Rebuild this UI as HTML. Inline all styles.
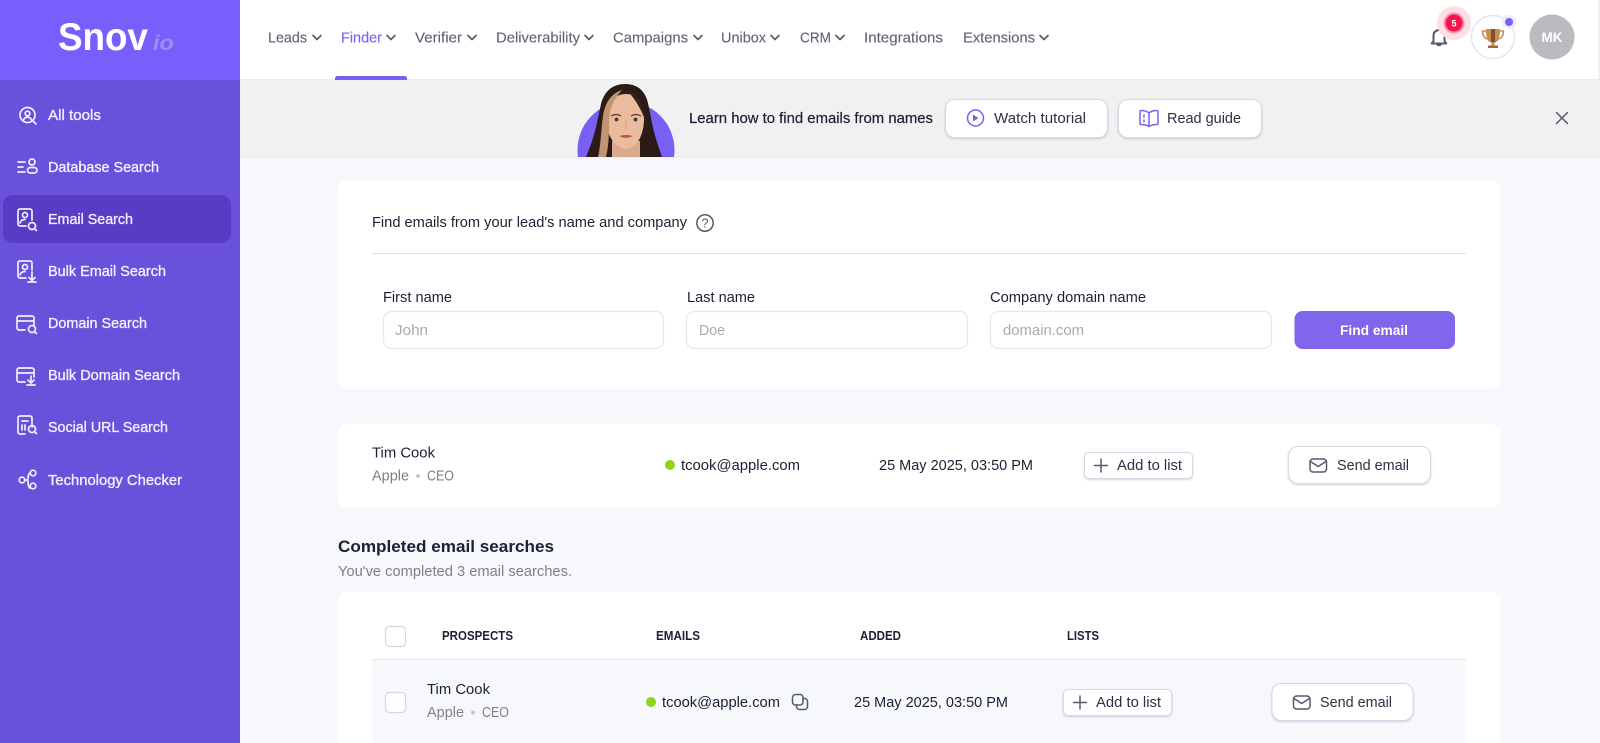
<!DOCTYPE html>
<html lang="en"><head><meta charset="utf-8"><title>Snov.io Email Search</title>
<style>
html,body{margin:0;padding:0;width:1600px;height:743px;overflow:hidden;background:#f7f8fc}
svg{display:block}
text{font-family:"Liberation Sans",sans-serif;font-size:14.5px;fill:#1c2033}
.nav{fill:#5f6374;stroke:#5f6374;stroke-width:.12}
.side{fill:#f1eeff;stroke:#f1eeff;stroke-width:.35;font-size:14.5px}
.ph{fill:#a9aab4}
.gr{fill:#7d7f8b}
.th{font-size:12.5px;font-weight:bold;fill:#1c2033}
.i{fill:none;stroke:#f1eeff;stroke-width:1.7;stroke-linecap:round;stroke-linejoin:round}
.d{fill:none;stroke:#555a6b;stroke-width:1.5;stroke-linecap:round;stroke-linejoin:round}
.p{fill:none;stroke:#7a5ff5;stroke-width:1.5;stroke-linecap:round;stroke-linejoin:round}
.btn{fill:#fff;stroke:#d8d7e6;stroke-width:1;filter:drop-shadow(0 1px 1px rgba(80,70,130,.25))}
.inp{fill:#fff;stroke:#e7e7ed;stroke-width:1.3}
</style></head><body>
<svg width="1600" height="743" viewBox="0 0 1600 743" xmlns="http://www.w3.org/2000/svg">
<rect width="1600" height="743" fill="#f7f8fc"/>
<!-- header -->
<rect x="240" width="1360" height="80" fill="#fff"/>
<rect x="1598" width="2" height="80" fill="#f2f2f4"/>
<rect x="240" y="79" width="1360" height="1" fill="#ececee"/>
<!-- banner -->
<rect x="240" y="80" width="1360" height="77" fill="#f1f1f2"/>
<rect x="240" y="156.500" width="1360" height="1" fill="#e4e4e8"/>
<!-- sidebar -->
<rect width="240" height="743" fill="#6a51dc"/>
<rect width="240" height="80" fill="#7a5efc"/>
<rect x="3" y="195" width="228" height="48" rx="10" fill="#563dc4"/>
<text x="58" y="50" textLength="90" lengthAdjust="spacingAndGlyphs" style="font-size:39px;font-weight:bold;fill:#fff">Snov</text>
<text x="153" y="50" textLength="21" lengthAdjust="spacingAndGlyphs" style="font-size:21px;font-style:italic;font-weight:bold;fill:#9d8ef3">io</text>
<text class="side" x="48" y="120" textLength="53" lengthAdjust="spacingAndGlyphs">All tools</text>
<text class="side" x="48" y="172" textLength="111" lengthAdjust="spacingAndGlyphs">Database Search</text>
<text class="side" x="48" y="224" textLength="85" lengthAdjust="spacingAndGlyphs">Email Search</text>
<text class="side" x="48" y="276" textLength="118" lengthAdjust="spacingAndGlyphs">Bulk Email Search</text>
<text class="side" x="48" y="328" textLength="99" lengthAdjust="spacingAndGlyphs">Domain Search</text>
<text class="side" x="48" y="380" textLength="132" lengthAdjust="spacingAndGlyphs">Bulk Domain Search</text>
<text class="side" x="48" y="432" textLength="120" lengthAdjust="spacingAndGlyphs">Social URL Search</text>
<text class="side" x="48" y="485" textLength="134" lengthAdjust="spacingAndGlyphs">Technology Checker</text>
<!-- sidebar icons -->
<g class="i">
<circle cx="27.500" cy="115" r="7.500"/><circle cx="27.500" cy="113.500" r="2.300"/><path d="M23.500 120c.8-2 2.200-2.800 4-2.800s3.200.8 4 2.800M33 121l3 3"/>
<path d="M18 162h7M18 167h5M18 172h7"/><circle cx="32" cy="162" r="3"/><rect x="27.500" y="167.500" width="9.500" height="5.500" rx="2.700"/>
<path d="M26 226h-6a2 2 0 0 1-2-2v-13a2 2 0 0 1 2-2h10a2 2 0 0 1 2 2v9"/><circle cx="25" cy="215" r="2.500"/><path d="M20 223c.8-2.500 2.500-3.500 5-3.500"/><circle cx="32" cy="226" r="3.500"/><path d="M34.500 228.500l2 2"/>
<path d="M26 278h-6a2 2 0 0 1-2-2v-13a2 2 0 0 1 2-2h10a2 2 0 0 1 2 2v7"/><circle cx="25" cy="267" r="2.500"/><path d="M20 275c.8-2.500 2.500-3.500 5-3.500M32 272v8M29 277.500l3 3 3-3M28 282h8"/>
<path d="M25 330h-6a2 2 0 0 1-2-2v-10a2 2 0 0 1 2-2h13a2 2 0 0 1 2 2v7M17 321h17"/><circle cx="32" cy="329" r="3.500"/><path d="M34.500 331.500l2 2"/>
<path d="M25 382h-6a2 2 0 0 1-2-2v-10a2 2 0 0 1 2-2h13a2 2 0 0 1 2 2v7M17 373h17M31 376v6M28 380l3 3 3-3M27 385h8"/>
<path d="M25 434h-5a2 2 0 0 1-2-2v-14a2 2 0 0 1 2-2h10a2 2 0 0 1 2 2v9M22 421h6M22 425v5M25 430v-5"/><circle cx="32" cy="429" r="3.500"/><path d="M34.500 431.500l2 2"/>
<circle cx="22" cy="480" r="2.800"/><circle cx="33" cy="473" r="2.800"/><circle cx="33" cy="486" r="2.800"/><path d="M24.800 480h2.200c1 0 1-1 1-2 0-3 1-5 2.500-5M27 480c1 0 1 1 1 2 0 3 1 6 2.200 6"/>
</g>
<!-- nav -->
<text class="nav" x="268" y="42.500" textLength="39" lengthAdjust="spacingAndGlyphs">Leads</text>
<text class="nav" x="341" y="42.500" textLength="41" lengthAdjust="spacingAndGlyphs" style="fill:#7a5ff5;stroke:#7a5ff5">Finder</text>
<text class="nav" x="415" y="42.500" textLength="47" lengthAdjust="spacingAndGlyphs">Verifier</text>
<text class="nav" x="496" y="42.500" textLength="84" lengthAdjust="spacingAndGlyphs">Deliverability</text>
<text class="nav" x="613" y="42.500" textLength="75" lengthAdjust="spacingAndGlyphs">Campaigns</text>
<text class="nav" x="721" y="42.500" textLength="45" lengthAdjust="spacingAndGlyphs">Unibox</text>
<text class="nav" x="800" y="42.500" textLength="31" lengthAdjust="spacingAndGlyphs">CRM</text>
<text class="nav" x="864" y="42.500" textLength="79" lengthAdjust="spacingAndGlyphs">Integrations</text>
<text class="nav" x="963" y="42.500" textLength="72" lengthAdjust="spacingAndGlyphs">Extensions</text>
<g class="d" style="stroke-width:1.6">
<path d="M313 35.500l4 4 4-4M387 35.500l4 4 4-4M468 35.500l4 4 4-4M585 35.500l4 4 4-4M694 35.500l4 4 4-4M771 35.500l4 4 4-4M836 35.500l4 4 4-4M1040 35.500l4 4 4-4"/>
</g>
<path d="M335 80v-1.500a2.500 2.500 0 0 1 2.500-2.500h67a2.500 2.500 0 0 1 2.500 2.500V80z" fill="#7a5ff5"/>
<!-- bell -->
<path class="d" d="M1433.500 41v-5.500a5.500 5.500 0 0 1 11 0v5.500l1.800 2.500h-14.600zM1437 44a2.200 2.200 0 0 0 4 0M1439 30v-1.500" style="stroke-width:2;fill:#fff"/>
<circle cx="1454" cy="23" r="17" fill="#fddfe6"/><circle cx="1454" cy="23" r="10.500" fill="#fb8fa6"/><circle cx="1454" cy="23" r="8.500" fill="#f5164f"/>
<text x="1451.500" y="26.500" textLength="5" lengthAdjust="spacingAndGlyphs" style="font-size:9px;font-weight:bold;fill:#fff">5</text>
<!-- trophy -->
<circle cx="1493" cy="37" r="21.500" fill="#fff" stroke="#e2dff0" stroke-width="1.200"/>
<path d="M1486 29h14c0 6-.5 10-2.500 12-1 1-2 1.500-3 1.800v3h-3v-3c-1-.3-2-.8-3-1.800-2-2-2.500-6-2.500-12z" fill="#c98d52"/>
<path d="M1491 29h4v13h-4z" fill="#7b5230"/>
<path d="M1486 31h-3.500c0 4 1.500 7 5 8M1500 31h3.500c0 4-1.500 7-5 8" fill="none" stroke="#c98d52" stroke-width="1.500"/>
<rect x="1488" y="45.500" width="10" height="2.500" fill="#9a6a3c"/>
<circle cx="1509" cy="22" r="7" fill="#ecebfb"/><circle cx="1509" cy="22" r="4" fill="#7a5ff5"/>
<circle cx="1552" cy="37" r="22.500" fill="#b9bbc0"/>
<text x="1541.500" y="42" textLength="21" lengthAdjust="spacingAndGlyphs" style="font-size:14px;font-weight:bold;fill:#fff">MK</text>
<!-- banner content -->
<clipPath id="cp"><rect x="570" y="80" width="120" height="77"/></clipPath>
<g clip-path="url(#cp)">
<circle cx="626" cy="150" r="48.500" fill="#7a5ff5"/>
<path d="M625 84c-13 0-21 8-24 20-3 14-6 30-11 43l-4 10h76l-4-12c-5-14-7-28-10-42-3-12-10-19-23-19z" fill="#2a1b17"/>
<path d="M612 157v-16h28v16z" fill="#dba98e"/>
<path d="M626 94c-13 0-20 11-20 25 0 15 9 30 20 30s18-15 18-30c0-14-6-25-18-25z" fill="#ecbb9e"/>
<path d="M622 90c-10 3-17 12-19 26-2 14-2 28-5 41h8c3-12 3-24 3-34 0-14 5-24 13-33z" fill="#c39472"/>
<path d="M627 90c9 3 15 12 18 24l4 22c-3-16-8-30-22-46z" fill="#33211b"/>
<path d="M611 116q5-3 10 0M631 116q5-3 10 0" fill="none" stroke="#5c3d2e" stroke-width="1.300"/>
<circle cx="616.500" cy="119.500" r="1.900" fill="#3d3a3a"/><circle cx="635.500" cy="119.500" r="1.900" fill="#3d3a3a"/>
<path d="M619 136q7 3.500 14 0q-7 -2 -14 0z" fill="#b4524e"/>
<path d="M626 121v8" fill="none" stroke="#d79f82" stroke-width="1"/>
</g>
<text x="689" y="123" textLength="244" lengthAdjust="spacingAndGlyphs" style="stroke:#1c2033;stroke-width:.2">Learn how to find emails from names</text>
<rect class="btn" x="945.500" y="99.500" width="162" height="38" rx="9"/>
<circle class="p" cx="975.500" cy="118" r="8"/><path d="M973 114.500v7l5.500-3.500z" fill="#7a5ff5"/>
<text x="994" y="123" textLength="92" lengthAdjust="spacingAndGlyphs" style="fill:#2d3142">Watch tutorial</text>
<rect class="btn" x="1118.500" y="99.500" width="143" height="38" rx="9"/>
<path class="p" d="M1149 113c-2-2-4-2.500-8-2.500-1 0-1 .5-1 1v12c0 .5 0 1 1 1 4 0 6 .5 8 2 2-1.500 4-2 8-2 1 0 1-.5 1-1v-12c0-.5 0-1-1-1-4 0-6 .5-8 2.500zM1149 113v13M1144 115v2M1144 120v2"/>
<text x="1167" y="123" textLength="74" lengthAdjust="spacingAndGlyphs" style="fill:#2d3142">Read guide</text>
<path class="d" d="M1556.500 112.500l11 11M1567.500 112.500l-11 11"/>
<!-- form card -->
<rect x="338" y="181" width="1162" height="208" rx="8" fill="#fff"/>
<text x="372" y="227" textLength="315" lengthAdjust="spacingAndGlyphs">Find emails from your lead's name and company</text>
<circle class="d" cx="705" cy="223" r="8.200"/>
<text x="701.500" y="227.500" textLength="7" lengthAdjust="spacingAndGlyphs" style="font-size:12.500px;fill:#555a6b">?</text>
<rect x="372" y="253" width="1094" height="1" fill="#dfddeb"/>
<text x="383" y="302" textLength="69" lengthAdjust="spacingAndGlyphs">First name</text>
<text x="687" y="302" textLength="68" lengthAdjust="spacingAndGlyphs">Last name</text>
<text x="990" y="302" textLength="156" lengthAdjust="spacingAndGlyphs">Company domain name</text>
<rect class="inp" x="383.500" y="311.500" width="280" height="37" rx="8"/>
<rect class="inp" x="686.500" y="311.500" width="281" height="37" rx="8"/>
<rect class="inp" x="990.500" y="311.500" width="281" height="37" rx="8"/>
<text class="ph" x="395" y="335" textLength="33" lengthAdjust="spacingAndGlyphs">John</text>
<text class="ph" x="699" y="335" textLength="26" lengthAdjust="spacingAndGlyphs">Doe</text>
<text class="ph" x="1003" y="335" textLength="81" lengthAdjust="spacingAndGlyphs">domain.com</text>
<rect x="1294.500" y="311" width="160.500" height="38" rx="8" fill="#7f66ea"/>
<text x="1340" y="335" textLength="68" lengthAdjust="spacingAndGlyphs" style="font-weight:bold;font-size:14px;fill:#fff">Find email</text>
<!-- result card -->
<rect x="338" y="424" width="1162" height="83" rx="8" fill="#fff"/>
<text x="372" y="457.500" textLength="63" lengthAdjust="spacingAndGlyphs">Tim Cook</text>
<text class="gr" x="372" y="480.500" textLength="37" lengthAdjust="spacingAndGlyphs">Apple</text>
<circle cx="418" cy="476" r="2" fill="#c6c7cf"/>
<text class="gr" x="427" y="480.500" textLength="27" lengthAdjust="spacingAndGlyphs">CEO</text>
<circle cx="670" cy="465" r="5" fill="#8fd31c"/>
<text x="681" y="470" textLength="119" lengthAdjust="spacingAndGlyphs">tcook@apple.com</text>
<text x="879" y="470" textLength="154" lengthAdjust="spacingAndGlyphs">25 May 2025, 03:50 PM</text>
<rect class="btn" x="1084.500" y="452.500" width="108" height="26" rx="4.500"/>
<path class="d" d="M1101 459v13M1094.500 465.500h13"/>
<text x="1117" y="470" textLength="65" lengthAdjust="spacingAndGlyphs" style="fill:#2d3142">Add to list</text>
<rect class="btn" x="1288.500" y="446.500" width="142" height="37" rx="9.500"/>
<rect class="d" x="1310" y="459" width="16.500" height="13" rx="3"/><path class="d" d="M1310.500 461.500l7.700 5 7.700-5"/>
<text x="1337" y="470" textLength="72" lengthAdjust="spacingAndGlyphs" style="fill:#2d3142">Send email</text>
<!-- heading -->
<text x="338" y="552" textLength="216" lengthAdjust="spacingAndGlyphs" style="font-size:17px;font-weight:bold">Completed email searches</text>
<text class="gr" x="338" y="576" textLength="234" lengthAdjust="spacingAndGlyphs">You've completed 3 email searches.</text>
<!-- table card -->
<rect x="338" y="592" width="1162" height="170" rx="8" fill="#fff"/>
<rect x="385.500" y="626.500" width="20" height="20" rx="4" fill="#fff" stroke="#d5d6e3" stroke-width="1.200"/>
<text class="th" x="442" y="640" textLength="71" lengthAdjust="spacingAndGlyphs">PROSPECTS</text>
<text class="th" x="656" y="640" textLength="44" lengthAdjust="spacingAndGlyphs">EMAILS</text>
<text class="th" x="860" y="640" textLength="41" lengthAdjust="spacingAndGlyphs">ADDED</text>
<text class="th" x="1067" y="640" textLength="32" lengthAdjust="spacingAndGlyphs">LISTS</text>
<rect x="372" y="659" width="1094" height="84" fill="#f7f8fc"/>
<rect x="372" y="659" width="1094" height="1" fill="#e2e3e8"/>
<rect x="385.500" y="692.500" width="20" height="20" rx="4" fill="#fff" stroke="#d5d6e3" stroke-width="1.200"/>
<text x="427" y="694" textLength="63" lengthAdjust="spacingAndGlyphs">Tim Cook</text>
<text class="gr" x="427" y="717" textLength="37" lengthAdjust="spacingAndGlyphs">Apple</text>
<circle cx="473" cy="712.500" r="2" fill="#c6c7cf"/>
<text class="gr" x="482" y="717" textLength="27" lengthAdjust="spacingAndGlyphs">CEO</text>
<circle cx="651" cy="702" r="5" fill="#8fd31c"/>
<text x="662" y="707" textLength="118" lengthAdjust="spacingAndGlyphs">tcook@apple.com</text>
<rect class="d" x="792.500" y="694.500" width="10.500" height="10.500" rx="3"/>
<path class="d" d="M803 698.500h1.500a3 3 0 0 1 3 3v5a3 3 0 0 1-3 3h-5a3 3 0 0 1-3-3V705"/>
<text x="854" y="707" textLength="154" lengthAdjust="spacingAndGlyphs">25 May 2025, 03:50 PM</text>
<rect class="btn" x="1063.500" y="689.500" width="108" height="26" rx="4.500"/>
<path class="d" d="M1080 696v13M1073.500 702.500h13"/>
<text x="1096" y="707" textLength="65" lengthAdjust="spacingAndGlyphs" style="fill:#2d3142">Add to list</text>
<rect class="btn" x="1272" y="683.500" width="141" height="37" rx="9.500"/>
<rect class="d" x="1293.500" y="696" width="16.500" height="13" rx="3"/><path class="d" d="M1294 698.500l7.700 5 7.700-5"/>
<text x="1320" y="707" textLength="72" lengthAdjust="spacingAndGlyphs" style="fill:#2d3142">Send email</text>
</svg>
</body></html>
